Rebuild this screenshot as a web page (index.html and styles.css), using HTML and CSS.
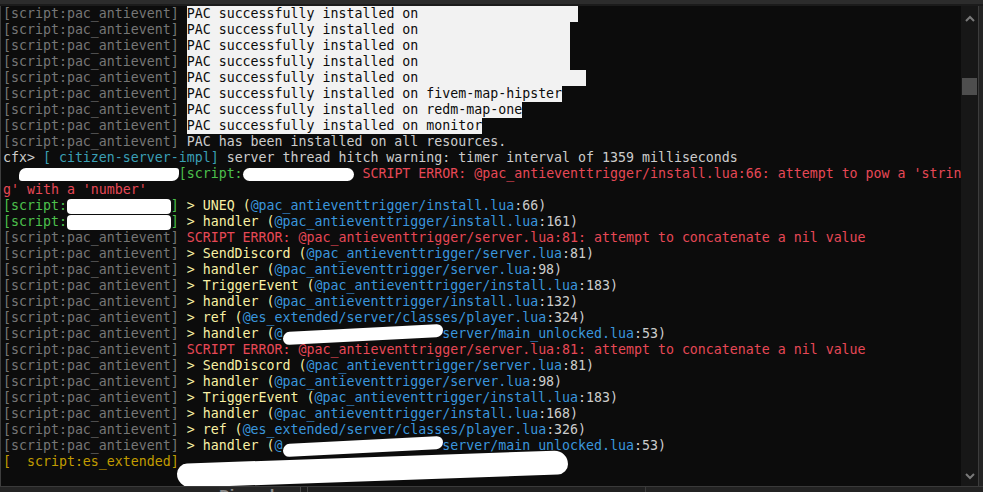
FILE: index.html
```html
<!DOCTYPE html>
<html>
<head>
<meta charset="utf-8">
<link rel="stylesheet" href="styles.css">
</head>
<body>
<div class="window">
  <div class="topbar"></div>
  <div class="main">
    <div class="console">
      <div class="row"><span class="gray">[script:pac_antievent]</span> <span class="sel">PAC successfully installed on <span class="blank">                   </span></span></div>
      <div class="row"><span class="gray">[script:pac_antievent]</span> <span class="sel">PAC successfully installed on <span class="blank">                  </span></span></div>
      <div class="row"><span class="gray">[script:pac_antievent]</span> <span class="sel">PAC successfully installed on <span class="blank">                  </span></span></div>
      <div class="row"><span class="gray">[script:pac_antievent]</span> <span class="sel">PAC successfully installed on <span class="blank">                  </span></span></div>
      <div class="row"><span class="gray">[script:pac_antievent]</span> <span class="sel">PAC successfully installed on <span class="blank">                    </span></span></div>
      <div class="row"><span class="gray">[script:pac_antievent]</span> <span class="sel">PAC successfully installed on fivem-map-hipster</span></div>
      <div class="row"><span class="gray">[script:pac_antievent]</span> <span class="sel">PAC successfully installed on redm-map-one</span></div>
      <div class="row"><span class="gray">[script:pac_antievent]</span> <span class="sel">PAC successfully installed on monitor</span></div>
      <div class="row"><span class="gray">[script:pac_antievent]</span> <span class="white">PAC has been installed on all resources.</span></div>
      <div class="row"><span class="white">cfx&gt; </span><span class="cyan">[ citizen-server-impl]</span><span class="white"> server thread hitch warning: timer interval of 1359 milliseconds</span></div>
      <div class="row">  <span class="scrib s1">                    </span><span class="green">[script:</span><span class="scrib s2">              </span> <span class="red">SCRIPT ERROR: @pac_antieventtrigger/install.lua:66: attempt to pow a 'strin</span></div>
      <div class="row"><span class="red">g' with a 'number'</span></div>
      <div class="row"><span class="green">[script:</span><span class="scrib s3">             </span><span class="green">]</span><span class="yellow"> &gt; UNEQ (</span><span class="blue">@pac_antieventtrigger/install.lua</span><span class="white">:66)</span></div>
      <div class="row"><span class="green">[script:</span><span class="scrib s3">             </span><span class="green">]</span><span class="yellow"> &gt; handler (</span><span class="blue">@pac_antieventtrigger/install.lua</span><span class="white">:161)</span></div>
      <div class="row"><span class="gray">[script:pac_antievent]</span> <span class="red">SCRIPT ERROR: @pac_antieventtrigger/server.lua:81: attempt to concatenate a nil value</span></div>
      <div class="row"><span class="gray">[script:pac_antievent]</span><span class="yellow"> &gt; SendDiscord (</span><span class="blue">@pac_antieventtrigger/server.lua</span><span class="white">:81)</span></div>
      <div class="row"><span class="gray">[script:pac_antievent]</span><span class="yellow"> &gt; handler (</span><span class="blue">@pac_antieventtrigger/server.lua</span><span class="white">:98)</span></div>
      <div class="row"><span class="gray">[script:pac_antievent]</span><span class="yellow"> &gt; TriggerEvent (</span><span class="blue">@pac_antieventtrigger/install.lua</span><span class="white">:183)</span></div>
      <div class="row"><span class="gray">[script:pac_antievent]</span><span class="yellow"> &gt; handler (</span><span class="blue">@pac_antieventtrigger/install.lua</span><span class="white">:132)</span></div>
      <div class="row"><span class="gray">[script:pac_antievent]</span><span class="yellow"> &gt; ref (</span><span class="blue">@es_extended/server/classes/player.lua</span><span class="white">:324)</span></div>
      <div class="row"><span class="gray">[script:pac_antievent]</span><span class="yellow"> &gt; handler (</span><span class="blue">@</span><span class="scrib s4">                    </span><span class="blue">server/main_unlocked.lua</span><span class="white">:53)</span></div>
      <div class="row"><span class="gray">[script:pac_antievent]</span> <span class="red">SCRIPT ERROR: @pac_antieventtrigger/server.lua:81: attempt to concatenate a nil value</span></div>
      <div class="row"><span class="gray">[script:pac_antievent]</span><span class="yellow"> &gt; SendDiscord (</span><span class="blue">@pac_antieventtrigger/server.lua</span><span class="white">:81)</span></div>
      <div class="row"><span class="gray">[script:pac_antievent]</span><span class="yellow"> &gt; handler (</span><span class="blue">@pac_antieventtrigger/server.lua</span><span class="white">:98)</span></div>
      <div class="row"><span class="gray">[script:pac_antievent]</span><span class="yellow"> &gt; TriggerEvent (</span><span class="blue">@pac_antieventtrigger/install.lua</span><span class="white">:183)</span></div>
      <div class="row"><span class="gray">[script:pac_antievent]</span><span class="yellow"> &gt; handler (</span><span class="blue">@pac_antieventtrigger/install.lua</span><span class="white">:168)</span></div>
      <div class="row"><span class="gray">[script:pac_antievent]</span><span class="yellow"> &gt; ref (</span><span class="blue">@es_extended/server/classes/player.lua</span><span class="white">:326)</span></div>
      <div class="row"><span class="gray">[script:pac_antievent]</span><span class="yellow"> &gt; handler (</span><span class="blue">@</span><span class="scrib s4">                    </span><span class="blue">server/main_unlocked.lua</span><span class="white">:53)</span></div>
      <div class="row"><span class="gold">[  script:es_extended]</span><span class="scrib s5">                                                 </span></div>
    </div>
    <div class="scrollbar">
      <svg class="arrow" width="10" height="7" viewBox="0 0 10 7"><path d="M1 6 L5 2 L9 6" fill="none" stroke="#7a7a7a" stroke-width="2"/></svg>
      <div class="track"><div class="thumb"></div></div>
      <svg class="arrow" width="10" height="7" viewBox="0 0 10 7"><path d="M1 1 L5 5 L9 1" fill="none" stroke="#7a7a7a" stroke-width="2"/></svg>
    </div>
    <div class="edge"></div>
  </div>
  <div class="bottombar">
    <div class="bseg b1"></div>
    <div class="bseg b2"><span class="blabel">Discord:</span></div>
    <div class="bseg b3"></div>
    <div class="bseg b4"></div>
    <div class="bseg b5"></div>
  </div>
</div>
</body>
</html>
```

FILE: styles.css
```css
html, body {
  margin: 0;
  padding: 0;
  background: #232323;
  overflow: hidden;
}

.window {
  width: 983px;
  height: 492px;
  display: flex;
  flex-direction: column;
}

.topbar {
  height: 4px;
  background: #2c2c2c;
  border-bottom: 2px solid #1b1b1b;
  flex: none;
}

.main {
  display: flex;
  height: 480px;
  flex: none;
  border-left: 1px solid #3e3e3e;
}

.console {
  flex: 1;
  background: #0c0c0c;
  padding-left: 2px;
  font-family: "DejaVu Sans Mono", "Liberation Mono", monospace;
  font-size: 13.28px;
  color: #cccccc;
  overflow: hidden;
}

.row {
  height: 16px;
  line-height: 16px;
  white-space: pre;
}

.gray { color: #767676; }
.white { color: #cccccc; }
.red { color: #e74856; }
.green { color: #4cc04c; }
.yellow { color: #f9f1a5; }
.blue { color: #3a96dd; }
.cyan { color: #3a9fb5; }
.gold { color: #c19c00; }

.sel {
  display: inline-block;
  height: 16px;
  background: #f2f2f2;
  color: #0c0c0c;
  vertical-align: top;
}

.blank {
  display: inline-block;
  height: 16px;
  vertical-align: top;
}

.scrib {
  display: inline-block;
  background: #ffffff;
  vertical-align: top;
  border-radius: 8px;
}

.s1 { height: 13px; margin-top: 2px; border-radius: 7px 3px 7px 3px; }
.s2 { height: 13px; margin-top: 2px; border-radius: 7px; }
.s3 { height: 15px; margin-top: 1px; border-radius: 4px; }
.s4 { height: 13px; margin-top: 2px; transform: skewY(-3deg); }
.s5 { height: 24px; margin-top: 3px; margin-left: -2px; border-radius: 10px 14px 10px 14px; transform: skewY(-2deg); }

.scrollbar {
  width: 17px;
  background: #171717;
  display: flex;
  flex-direction: column;
  align-items: center;
  padding: 9px 0 6px;
  flex: none;
}

.arrow {
  flex: none;
}

.track {
  flex: 1;
  width: 100%;
  padding-top: 56px;
}

.thumb {
  width: 15px;
  height: 17px;
  margin-left: 1px;
  background: #4e4e4e;
}

.edge {
  width: 4px;
  flex: none;
  background: #232323;
  border-left: 1px solid #3c3c3c;
}

.bottombar {
  flex: 1;
  display: flex;
  border-top: 1px solid #3a3a3a;
  background: #1e1e1e;
  overflow: hidden;
}

.bseg {
  height: 100%;
}

.b1 { width: 219px; background: #242424; }
.b2 { width: 81px; background: #262626; overflow: hidden; border-right: 1px solid #4a4a4a; }
.b3 { width: 6px; background: #1c1c1c; border-right: 1px solid #444; }
.b4 { width: 337px; background: #202020; border-right: 1px solid #3c3c3c; }
.b5 { flex: 1; background: #232323; }

.blabel {
  display: block;
  font-family: "DejaVu Sans", sans-serif;
  font-weight: bold;
  font-size: 13px;
  color: #8a8a8a;
  line-height: 14px;
  margin-top: 1px;
}
```
